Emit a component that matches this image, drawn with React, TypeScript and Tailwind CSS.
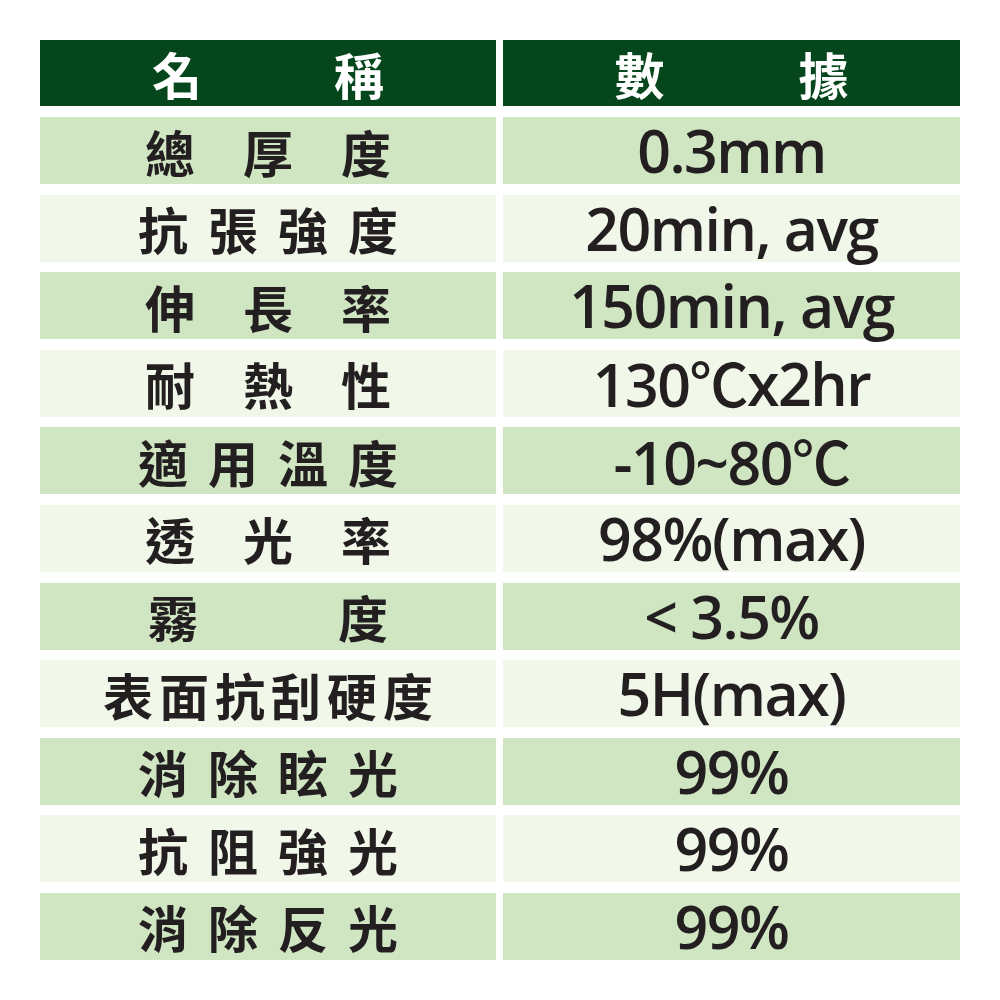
const ROWS: { label: string[]; gap: string; value: string }[] = [
  { label: ['總', '厚', '度'], gap: 'gap-[48px]', value: '0.3mm' },
  { label: ['抗', '張', '強', '度'], gap: 'gap-[20px]', value: '20min, avg' },
  { label: ['伸', '長', '率'], gap: 'gap-[48px]', value: '150min, avg' },
  { label: ['耐', '熱', '性'], gap: 'gap-[48px]', value: '130℃x2hr' },
  { label: ['適', '用', '溫', '度'], gap: 'gap-[20px]', value: '-10~80℃' },
  { label: ['透', '光', '率'], gap: 'gap-[48px]', value: '98%(max)' },
  { label: ['霧', '度'], gap: 'gap-[140px]', value: '< 3.5%' },
  { label: ['表', '面', '抗', '刮', '硬', '度'], gap: 'gap-[6px]', value: '5H(max)' },
  { label: ['消', '除', '眩', '光'], gap: 'gap-[20px]', value: '99%' },
  { label: ['抗', '阻', '強', '光'], gap: 'gap-[20px]', value: '99%' },
  { label: ['消', '除', '反', '光'], gap: 'gap-[20px]', value: '99%' },
];

const cjk = "font-['Noto_Sans_CJK_TC','Noto_Sans_CJK_SC',sans-serif]";
const latin = "font-['Open_Sans','Noto_Sans_CJK_TC',sans-serif]";

// the ℃ glyph comes from the CJK font; a lighter weight keeps it in line with the digits
function Value({ text }: { text: string }) {
  const parts = text.split('℃');
  return (
    <>
      {parts.map((p, i) => (
        <span key={i}>
          {p}
          {i < parts.length - 1 && <span className={`font-medium ${cjk}`}>℃</span>}
        </span>
      ))}
    </>
  );
}

export default function App() {
  return (
    <div className="w-[1000px] h-[1000px] bg-white pl-[40px] pt-[40px]">
      <div className="w-[920px] flex flex-col">
        {/* Header */}
        <div className="flex gap-[7px] h-[66px] mb-[11px]">
          <div className={`w-[456px] bg-[#05461c] flex items-center justify-center gap-[132px] text-white text-[50px] font-bold leading-none ${cjk}`}>
            <span>名</span>
            <span>稱</span>
          </div>
          <div className={`flex-1 bg-[#05461c] flex items-center justify-center gap-[134px] text-white text-[50px] font-bold leading-none ${cjk}`}>
            <span>數</span>
            <span>據</span>
          </div>
        </div>

        {/* Body */}
        <div className="flex flex-col gap-[10.6px]">
          {ROWS.map((row, i) => {
            const bg = i % 2 === 0 ? 'bg-[#d0e6c3]' : 'bg-[#f1f8ea]';
            return (
              <div key={i} className="flex gap-[7px] h-[67px]">
                <div className={`w-[456px] ${bg} flex items-center justify-center ${row.gap} text-[#231f20] text-[50px] font-bold leading-none ${cjk}`}>
                  {row.label.map((c, j) => (
                    <span key={j}>{c}</span>
                  ))}
                </div>
                <div className={`flex-1 ${bg} flex items-center justify-center text-[#231f20] text-[59px] tracking-[-1.5px] font-semibold leading-none ${latin}`}>
                  <Value text={row.value} />
                </div>
              </div>
            );
          })}
        </div>
      </div>
    </div>
  );
}
